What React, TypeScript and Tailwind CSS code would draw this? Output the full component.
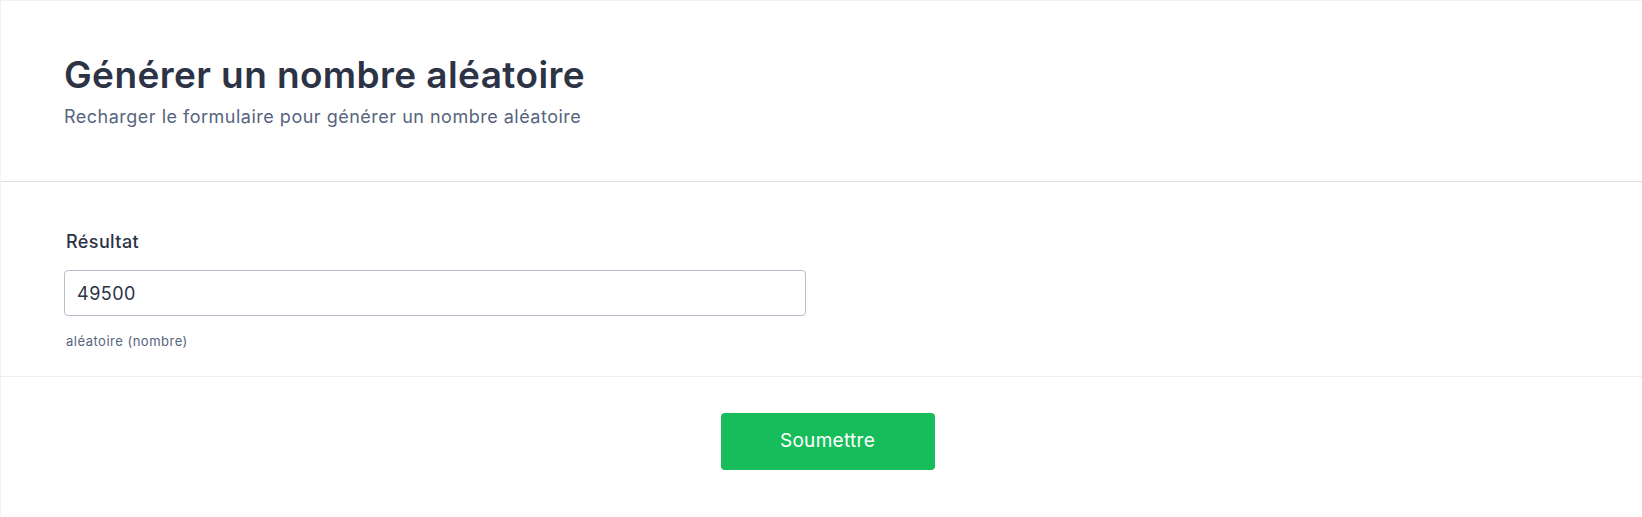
export default function App() {
  return (
    <div className="min-h-[517px] bg-white font-['Inter',sans-serif] border-t border-l border-[#f1f2f5]">
      {/* Header */}
      <div className="px-[63px] pt-[54px] pb-[52px] border-b border-[#dcdfe6]">
        <h1 className="text-[37px] leading-10 font-semibold tracking-[0.4px] text-[#2c3345]">
          Générer un nombre aléatoire
        </h1>
        <p className="mt-[10px] text-[18px] leading-6 tracking-[0.5px] text-[#57647e]">
          Recharger le formulaire pour générer un nombre aléatoire
        </p>
      </div>

      {/* Field */}
      <div className="px-[63px] pt-[48px] pb-[26px] border-b border-[#eceef3]">
        <label className="block pl-[2px] text-[18px] leading-6 font-medium tracking-[0.4px] text-[#2c3345]">
          Résultat
        </label>
        <input
          type="text"
          readOnly
          value="49500"
          className="mt-4 block w-[742px] h-[46px] rounded-[4px] border border-[#b8bdc9] px-[12px] text-[18px] tracking-[0.5px] text-[#2c3345] outline-none"
        />
        <p className="mt-4 pl-[2px] text-[13px] leading-[18px] tracking-[0.5px] text-[#57647e]">
          aléatoire (nombre)
        </p>
      </div>

      {/* Submit */}
      <div className="flex justify-center pl-[12px] pt-[36px] pb-[46px]">
        <button className="w-[214px] h-[57px] rounded-[4px] bg-[#18bd5b] text-[19px] tracking-[0.3px] text-white">
          Soumettre
        </button>
      </div>
    </div>
  );
}
